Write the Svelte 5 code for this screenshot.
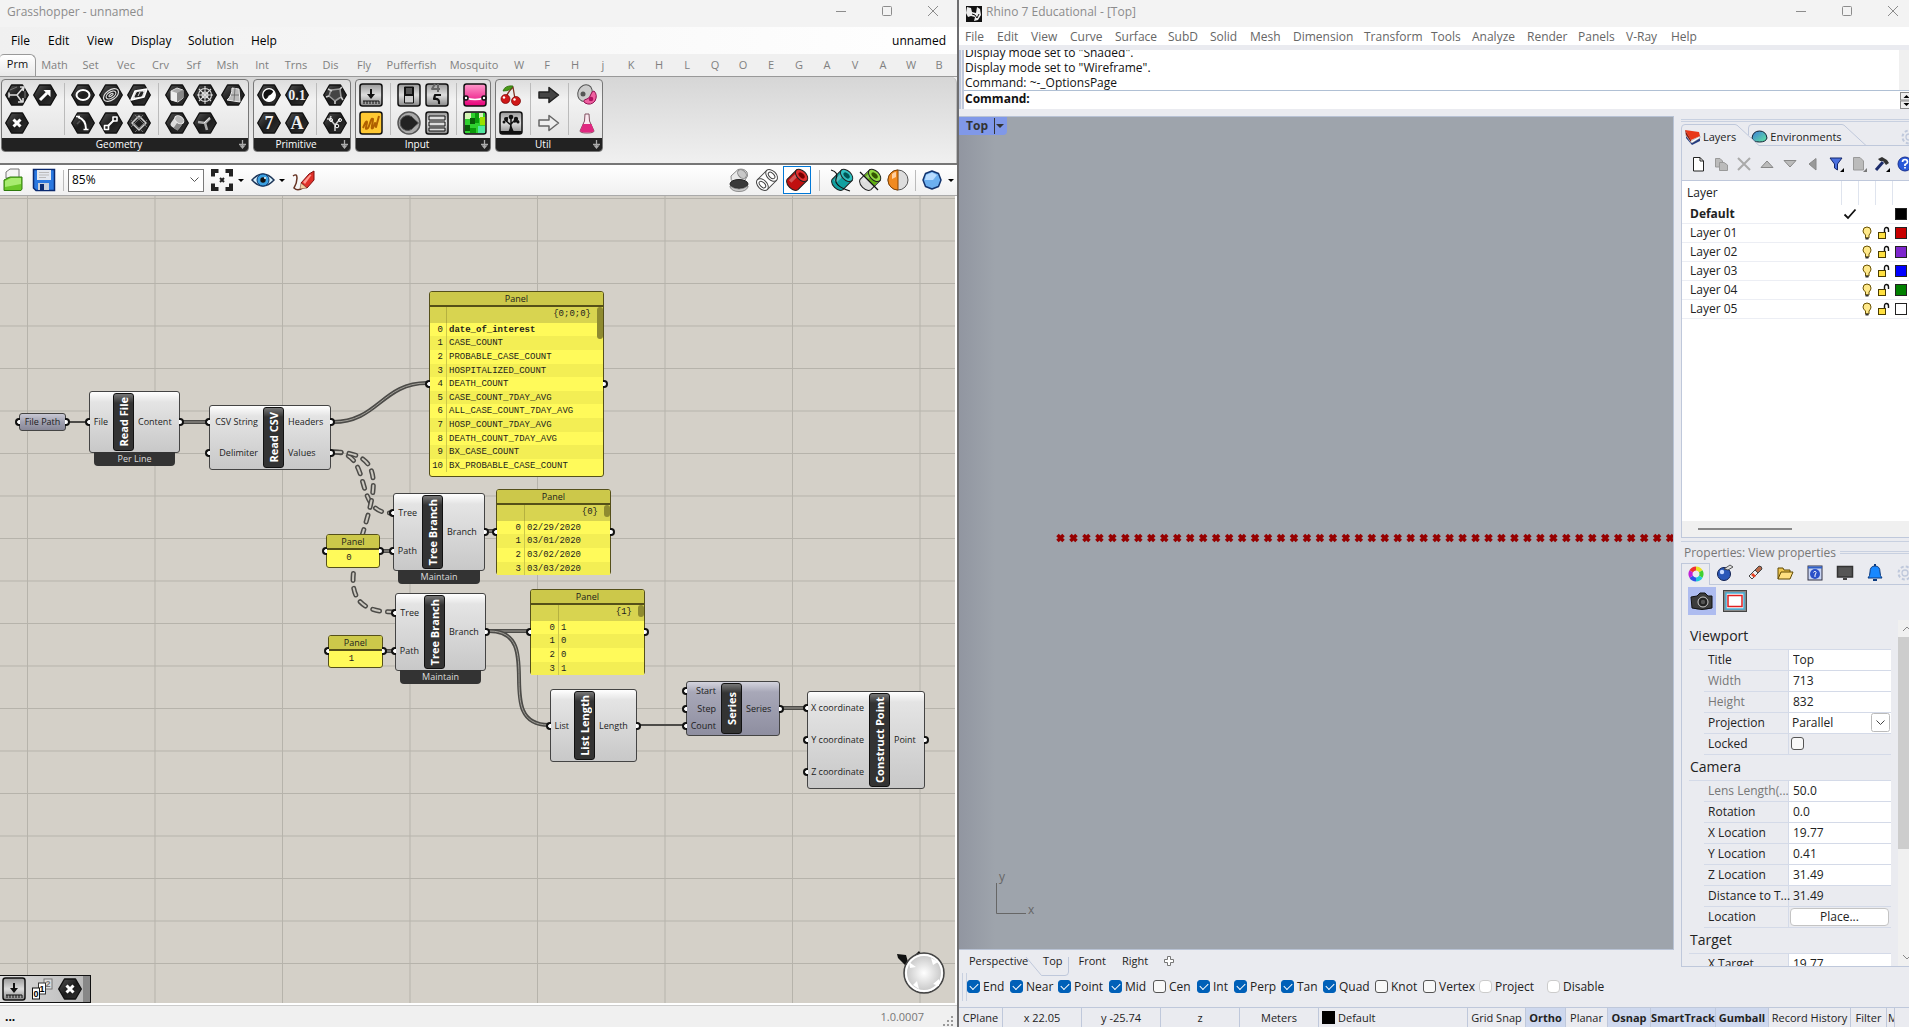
<script>
  const ghMenu = [['File', 37], ['Edit', 39], ['View', 44], ['Display', 57], ['Solution', 63], ['Help', 40]];
  const rhMenu = [['File', 32], ['Edit', 34], ['View', 39], ['Curve', 45], ['Surface', 53], ['SubD', 42], ['Solid', 40], ['Mesh', 43], ['Dimension', 71], ['Transform', 67], ['Tools', 41], ['Analyze', 55], ['Render', 51], ['Panels', 48], ['V-Ray', 45], ['Help', 40]];
  const ghTabs = [['Prm', 36], ['Math', 37], ['Set', 35], ['Vec', 36], ['Crv', 33], ['Srf', 33], ['Msh', 35], ['Int', 34], ['Trns', 34], ['Dis', 35], ['Fly', 32], ['Pufferfish', 63], ['Mosquito', 62], ...'WFHjKHLQOEGAVAWB'.split('').map((c) => [c, 28])];
  const ribbon = [
    { name: 'Geometry', groups: [['fork', 'vector', 'cross'], ['circle', 'spiral', 'plane', 'arc', 'line', 'rect'], ['box', 'mesh', 'surface', 'cyl', 'field']] },
    { name: 'Primitive', groups: [['bool', 'num', 'int', 'text'], ['path', 'tree']] },
    { name: 'Input', groups: [['slider', 'scribble'], ['toggle', 'digits', 'knob', 'list'], ['pink', 'swatch']] },
    { name: 'Util', groups: [['cherry', 'oak'], ['arrowD', 'arrowL'], ['blobs', 'flask']] }
  ];
  const colsOf = (g) => (g.length > 4 ? 3 : g.length > 2 ? 2 : 1);
  const hexKinds = ['fork', 'vector', 'cross', 'circle', 'spiral', 'plane', 'arc', 'line', 'rect', 'box', 'mesh', 'surface', 'cyl', 'field', 'bool', 'num', 'int', 'text', 'path', 'tree'];
  const squareKinds = ['slider', 'toggle', 'digits', 'list', 'oak', 'scribble', 'pink', 'swatch'];

  const nodes = [
    { name: 'Read File', x: 89, y: 195, w: 91, h: 62, label: 23, ins: ['File'], outs: ['Content'], foot: 'Per Line' },
    { name: 'Read CSV', x: 209, y: 209, w: 122, h: 65, label: 53, ins: ['CSV String', 'Delimiter'], outs: ['Headers', 'Values'] },
    { name: 'Tree Branch', x: 393, y: 297, w: 92, h: 78, label: 28, ins: ['Tree', 'Path'], outs: ['Branch'], foot: 'Maintain' },
    { name: 'Tree Branch', x: 395, y: 397, w: 91, h: 78, label: 28, ins: ['Tree', 'Path'], outs: ['Branch'], foot: 'Maintain' },
    { name: 'List Length', x: 550, y: 493, w: 87, h: 73, label: 23, ins: ['List'], outs: ['Length'] },
    { name: 'Series', x: 686, y: 485, w: 94, h: 55, label: 34, ins: ['Start', 'Step', 'Count'], outs: ['Series'], blue: true },
    { name: 'Construct Point', x: 807, y: 495, w: 118, h: 98, label: 61, ins: ['X coordinate', 'Y coordinate', 'Z coordinate'], outs: ['Point'] }
  ];
  const panels = [
    { x: 429, y: 95, w: 175, h: 186, path: '{0;0;0}', gutter: 17, thumb: 32, grip: 88, rows: ['date_of_interest', 'CASE_COUNT', 'PROBABLE_CASE_COUNT', 'HOSPITALIZED_COUNT', 'DEATH_COUNT', 'CASE_COUNT_7DAY_AVG', 'ALL_CASE_COUNT_7DAY_AVG', 'HOSP_COUNT_7DAY_AVG', 'DEATH_COUNT_7DAY_AVG', 'BX_CASE_COUNT', 'BX_PROBABLE_CASE_COUNT'] },
    { x: 496, y: 293, w: 115, h: 86, path: '{0}', gutter: 28, thumb: 12, grip: 38, rows: ['02/29/2020', '03/01/2020', '03/02/2020', '03/03/2020'] },
    { x: 530, y: 393, w: 115, h: 86, path: '{1}', gutter: 28, thumb: 12, grip: 38, rows: ['1', '0', '0', '1'] },
    { x: 326, y: 338, w: 54, h: 34, value: '0', grip: 12 },
    { x: 328, y: 439, w: 55, h: 33, value: '1', grip: 11 }
  ];
  const wires = [
    { d: 'M68 226H88', kind: 'single' },
    { d: 'M183 226H207', kind: 'double' },
    { d: 'M333 226C378 226 382 187 427 187', kind: 'double' },
    { d: 'M334 256C374 256 352 317 391 317', kind: 'dashed' },
    { d: 'M334 256C440 256 286 416 393 416', kind: 'dashed' },
    { d: 'M487 335H495', kind: 'double' },
    { d: 'M489 435H529', kind: 'double' },
    { d: 'M489 435C548 435 490 529 549 529', kind: 'double' },
    { d: 'M382 355H392', kind: 'double' },
    { d: 'M385 455H394', kind: 'double' },
    { d: 'M638 529H684', kind: 'single' },
    { d: 'M781 512H806', kind: 'double' }
  ];
  const layers = [['Default', '#000000'], ['Layer 01', '#c80000'], ['Layer 02', '#7d26cd'], ['Layer 03', '#0000ff'], ['Layer 04', '#008000'], ['Layer 05', '#ffffff']];
  const viewRows = [['Title', 'Top'], ['Width', '713', 1], ['Height', '832', 1], ['Projection', 'Parallel'], ['Locked', '']];
  const cameraRows = [['Lens Length(...', '50.0', 1], ['Rotation', '0.0'], ['X Location', '19.77'], ['Y Location', '0.41'], ['Z Location', '31.49'], ['Distance to T...', '31.49'], ['Location', 'Place...']];
  const snaps = [['End', 1, 43], ['Near', 1, 48], ['Point', 1, 51], ['Mid', 1, 44], ['Cen', 0, 44], ['Int', 1, 37], ['Perp', 1, 47], ['Tan', 1, 42], ['Quad', 1, 52], ['Knot', 0, 48], ['Vertex', 0, 56]];
  const cells = [['CPlane', 44], ['x 22.05', 79], ['y -25.74', 79], ['z', 79], ['Meters', 79]];
  const modes = [['Grid Snap', 58], ['Ortho', 40, 1], ['Planar', 42], ['Osnap', 43, 1], ['SmartTrack', 65, 1], ['Gumball', 53, 1], ['Record History', 82], ['Filter', 36], ['Microsoft', 8]];
  const points = Array.from({ length: 48 }, (_, i) => 101.5 + i * 12.97);
</script>

{#snippet windowButtons()}
  <div class="winbtns">
    <button aria-label="Minimize"><svg width="12" height="12"><path d="M1 6.5H11" /></svg></button>
    <button aria-label="Maximize"><svg width="12" height="12"><rect x="1.5" y="1.5" width="9" height="9" rx="1" /></svg></button>
    <button aria-label="Close"><svg width="12" height="12"><path d="M1 1L11 11M11 1L1 11" /></svg></button>
  </div>
{/snippet}

{#snippet icon(k)}
  <svg class="ico" viewBox="0 0 24 24" fill="none" stroke="#fff" stroke-width="1.6" stroke-linejoin="round">
    {#if hexKinds.includes(k)}
      <path d="M6.5 2H17.5L23.3 12L17.5 22H6.5L.7 12Z" fill="url(#gHex)" stroke="#111" stroke-width="1.4" />
    {/if}
    {#if k === 'fork'}
      <path d="M4 12H12L18 5M12 12L17 19M15 4L19 4L18 8M4 9.500V14.500M13 19H18V15" stroke="#ddd" /><path d="M5 7L12 4M20 8V15" stroke="#777" stroke-width="1" />
    {:else if k === 'vector'}
      <path d="M7 17L14 10" stroke-width="3" /><path d="M10.500 7H17.500V14Z" fill="#fff" stroke="none" />
    {:else if k === 'cross'}
      <path d="M8.500 8.500L15.500 15.500M15.500 8.500L8.500 15.500" stroke-width="3" />
    {:else if k === 'circle'}
      <ellipse cx="12" cy="12" rx="6.500" ry="5" stroke-width="2" />
    {:else if k === 'spiral'}
      <g transform="rotate(-35 12 12)" stroke="#ddd" stroke-width="1.200"><ellipse cx="12" cy="12" rx="8.500" ry="5" /><ellipse cx="12" cy="12" rx="5.500" ry="3" /><ellipse cx="12" cy="12" rx="2.500" ry="1" /></g>
    {:else if k === 'plane'}
      <path d="M4 17L8 8L20 6L17 14Z" fill="#ddd" /><path d="M8 14L10 9.500L16 9L14.500 13Z" fill="#222" stroke="#222" stroke-width="1" /><path d="M11 13L13 9" stroke="#ddd" stroke-width="1" />
    {:else if k === 'arc'}
      <path d="M7 6C13 8 15 12 15 18" stroke-width="1.900" /><path d="M5 5.500H9M12.500 18.500H17.500" /><path d="M6 13L9 10" stroke="#555" />
    {:else if k === 'line'}
      <path d="M8.500 15.500L15.500 8.500" stroke-width="2" /><rect x="5.500" y="14.500" width="4" height="4" fill="#222" /><rect x="14" y="6" width="4" height="4" fill="#222" />
    {:else if k === 'rect'}
      <path d="M12 5L19 12L12 19L5 12Z" stroke="#ccc" /><path d="M8 4L20 16M16 4L4 16M4 9L16 21M20 9L8 21" stroke="#888" stroke-width=".7" />
    {:else if k === 'box'}
      <path d="M6 8L12 5L18 7V15L13 19L6 17Z" fill="#aaa" stroke="#ddd" stroke-width="1" /><path d="M6 8L12 10V19L6 17Z" fill="#eee" stroke="none" /><path d="M12 10L18 7V15L12 19Z" fill="#888" stroke="none" />
    {:else if k === 'mesh'}
      <g stroke="#ddd" stroke-width="1.100"><circle cx="12" cy="12" r="3" /><circle cx="12" cy="12" r="6.500" /><path d="M12 3V21M4 12H20M6 6L18 18M18 6L6 18" /></g>
    {:else if k === 'surface'}
      <path d="M11 5L18 6L19 19L6 17Q11 13 11 5Z" fill="#bbb" stroke="#eee" stroke-width="1" /><path d="M14 5L13 18M10 12L18 12" stroke="#666" stroke-width=".8" />
    {:else if k === 'cyl'}
      <g transform="rotate(35 12 12)"><rect x="7" y="8" width="10" height="10" fill="#ddd" stroke="none" rx="3" /><rect x="12" y="8" width="5" height="10" fill="#888" stroke="none" /><ellipse cx="12" cy="8" rx="5" ry="3.500" fill="#bbb" stroke="#eee" stroke-width="1" /></g>
    {:else if k === 'field'}
      <path d="M12 12L17 7M12 12L5 11M12 12L14 19" stroke="#aaa" stroke-width="2.600" /><path d="M11 12L17 6.500" stroke="#eee" stroke-width="1" />
    {:else if k === 'bool'}
      <circle cx="12" cy="12" r="6" fill="#fff" stroke-width="1" /><path d="M16.200 7.800A6 6 0 0 0 6 12Q6 14 7.800 16.200Q11 15 11.500 12.500Q15 11.500 16.200 7.800Z" fill="#111" stroke="#111" stroke-width=".6" /><circle cx="12" cy="12" r="6.300" stroke-width="1.300" />
    {:else if k === 'num' || k === 'int' || k === 'text'}
      <text x="12" y={k === 'num' ? 16.5 : 18} text-anchor="middle" font-family="Liberation Serif, serif" font-weight="700" font-size={k === 'num' ? 14 : 18} fill="#eee" stroke="none">{k === 'num' ? '0.1' : k === 'int' ? '7' : 'A'}</text>
    {:else if k === 'path'}
      <path d="M8 7L17 6L18 14L12 18L6 13Z" fill="#444" stroke="#999" /><path d="M5 6L9 8M18 14L20 17M12 18V21M6 13L3 14M17 6L19 4" stroke="#ccc" />
    {:else if k === 'tree'}
      <path d="M12 20V14L7 8M12 14L17 8M8 5L7 8L4 8" stroke="#ccc" /><circle cx="8" cy="9" r="1.500" stroke-width="1" /><circle cx="17" cy="9" r="1.500" stroke-width="1" /><circle cx="14" cy="15" r="1.800" stroke-width="1" />
    {:else if squareKinds.includes(k)}
      <rect x="1" y="1" width="22" height="22" rx="2.500" fill={k === 'scribble' ? '#ffc832' : k === 'pink' ? 'url(#gPink)' : 'url(#gGrey)'} stroke="#111" stroke-width="1.500" />
      {#if k === 'slider'}
        <path d="M12 6V13" stroke="#111" stroke-width="2" /><path d="M8 11H16L12 16Z" fill="#111" stroke="none" /><path d="M4 18H20M5 18V21M8 18V21M11 18V21M14 18V21M17 18V21M20 18V21" stroke="#111" stroke-width="1" />
      {:else if k === 'scribble'}
        <path d="M4 17C5 15 7 9 8 11C8 14 5 20 9 17C11 14 12 6 14 8C14 13 11 19 14 17L16 12L17 16L20 5" stroke="#b06000" stroke-width="2" />
      {:else if k === 'toggle'}
        <rect x="7.500" y="4" width="9" height="16" fill="#ccc" stroke="#111" stroke-width="1" /><rect x="8" y="4" width="8" height="9" fill="#111" stroke="none" /><rect x="9" y="5" width="6" height="6" fill="#555" stroke="none" />
      {:else if k === 'digits'}
        <path d="M10 1L7 6H15M13 1V9" stroke="#666" stroke-width="2" /><path d="M16 12H10L9 16Q15 15 14 21" stroke="#111" stroke-width="2.200" />
      {:else if k === 'list'}
        <path d="M4 5H20V9H4ZM4 11H20V15H4ZM4 17H20V20H4Z" stroke="#111" stroke-width="1" fill="#ddd" />
      {:else if k === 'pink'}
        <path d="M3 15Q12 18 21 15" stroke="#fff" stroke-width="1.500" /><circle cx="3" cy="15" r="2" fill="#fff" stroke="#111" /><circle cx="21" cy="15" r="2" fill="#fff" stroke="#111" />
      {:else if k === 'swatch'}
        <g stroke="none"><rect x="2" y="2" width="20" height="20" fill="#2fd02f" /><path d="M2 2H8V8H2ZM14 2H20V7H14Z" fill="#d5f5b5" /><path d="M7 7H12V13H7ZM2 14H7V20H2Z" fill="#085c08" /><path d="M12 2H16V12H12ZM7 17H13V22H7Z" fill="#0a9a0a" /><path d="M17 6H22V14H17Z" fill="#9be100" /><path d="M15 15H22V22H15Z" fill="#4fe8a0" /></g>
      {:else}
        <path d="M11 20L12 13M12 14L6 9M12 13L17 8M12 14V6M8 11L8 6M15 11L20 10" stroke="#111" stroke-width="1.500" /><g fill="#111" stroke="none"><circle cx="7" cy="8" r="2" /><circle cx="12" cy="6" r="2.300" /><circle cx="17" cy="8" r="2.200" /><circle cx="5" cy="11" r="1.500" /><circle cx="19" cy="11" r="1.500" /><path d="M9 21Q12 16 12 14L15 21Z" /><rect x="1" y="20" width="22" height="3" /></g>
      {/if}
    {:else if k === 'knob'}
      <circle cx="12" cy="12" r="11" fill="#aaa" stroke="#555" stroke-width="1.500" /><path d="M21.500 12L17 8A7.500 7.500 0 1 0 17 16Z" fill="#222" stroke="#555" stroke-width="1" />
    {:else if k === 'cherry'}
      <path d="M7 14Q9 9 14 4Q15 10 16 16" stroke="#803020" stroke-width="1.300" /><path d="M4 8Q6 2 14 3Q12 8 4 8Z" fill="#4a9a18" stroke="#2a6a08" stroke-width=".8" /><circle cx="6.500" cy="16" r="4.500" fill="#d01818" stroke="#700" stroke-width=".7" /><circle cx="17" cy="18" r="4.500" fill="#d01818" stroke="#700" stroke-width=".7" /><circle cx="5" cy="14.500" r="1.200" fill="#fff" stroke="none" /><circle cx="15.500" cy="16.500" r="1.200" fill="#fff" stroke="none" />
    {:else if k === 'arrowD' || k === 'arrowL'}
      <path d="M2 9H12V4.500L21.500 12L12 19.500V15H2Z" fill={k === 'arrowD' ? '#444' : '#eee'} stroke={k === 'arrowD' ? '#222' : '#666'} stroke-width="1.500" />
    {:else if k === 'blobs'}
      <ellipse cx="10" cy="10" rx="7" ry="8.500" transform="rotate(25 10 10)" fill="#ccc" stroke="#555" stroke-width="1" /><circle cx="8" cy="11" r="2.500" fill="#555" stroke="none" /><path d="M19 8Q23 12 20 18Q16 23 10 20Q7 17 12 16Q15 15 16 11Q17 8 19 8Z" fill="#f060a0" stroke="#901050" stroke-width="1" /><circle cx="16" cy="16" r="2.300" fill="#b01060" stroke="none" />
    {:else if k === 'flask'}
      <path d="M10 3H14L14.500 10L19 20Q19 22 12 22Q5 22 5 20L9.500 10Z" fill="#fbe8f0" stroke="#805060" stroke-width="1" /><path d="M8 13H16.500L19 20Q18 21.500 12 21.500Q6 21.500 5 20Z" fill="#e02880" stroke="none" />
    {/if}
  </svg>
{/snippet}

{#snippet drum(kind)}
  <svg class="ico" viewBox="0 0 24 24" stroke-linejoin="round">
    {#if kind === 'shade'}
      <path d="M4 8L11 1.500Q17 0 20 4Q22 8 18 12L15 15H7Q3 12 4 8Z" fill="#e8e8e8" stroke="#888" /><ellipse cx="15" cy="6" rx="5" ry="3.600" fill="#c8c8c8" stroke="#888" transform="rotate(45 15 6)" /><ellipse cx="12" cy="16" rx="9" ry="4.500" fill="#3a3a3a" stroke="#222" /><path d="M3 18Q12 24 21 18V19Q19 23.500 12 23.500T3 19Z" fill="#ccc" stroke="#777" stroke-width=".8" />
    {:else if kind === 'wire'}
      <g transform="rotate(45 12 12)" fill="#fff" stroke="#444"><rect x="5" y="6" width="14" height="12" /><ellipse cx="12" cy="5.500" rx="7" ry="4.500" /><ellipse cx="12" cy="5.500" rx="4" ry="2.300" /><ellipse cx="12" cy="18.500" rx="7" ry="4.500" /><ellipse cx="12" cy="18.500" rx="4" ry="2.300" /></g>
    {:else if kind === 'half'}
      <circle cx="12" cy="12" r="10" fill="#ddd" stroke="#555" /><path d="M12 2A10 10 0 0 0 12 22Z" fill="#f08a20" stroke="#8a4500" /><path d="M6 6Q8 4 10 4V9L6 11Z" fill="#ffd0a0" />
    {:else if kind === 'hexblue'}
      <path d="M12 3L18.500 5.500L21 12L18.500 18.500L12 21L5.500 18.500L3 12L5.500 5.500Z" fill="#6cb0f0" stroke="#13346e" stroke-width="1.500" /><path d="M6 7L12 4.500L17 7L13 12L5 12Z" fill="#b8dcff" />
    {:else}
      <g transform="rotate(45 12 12)">
        <path d="M4.500 5V18.500Q6 22.500 12 22.500T19.500 18.500V5Z" fill={kind === 'red' ? '#c01010' : kind === 'teal' ? '#12a0a0' : '#ddd'} stroke="#222" />
        {#if kind === 'green'}<rect x="5" y="5" width="14" height="8" fill="#5fb010" />{/if}
        <path d="M6.500 8V18H10V9Z" fill="#fff" opacity=".3" />
        <ellipse cx="12" cy="5.500" rx="7.500" ry="4.500" fill={kind === 'red' ? '#e03030' : kind === 'teal' ? '#30c0c0' : '#90d840'} stroke="#222" />
        <ellipse cx="12" cy="5.500" rx="3.800" ry="2.200" fill={kind === 'red' ? '#700' : kind === 'teal' ? '#055' : '#350'} />
      </g>
      {#if kind === 'teal'}<path d="M1 2Q9 4 6 11Q4 18 20 23" fill="none" stroke="#111" stroke-width="1.200" />{/if}
      {#if kind === 'green'}<path d="M2 4L20 22" stroke="#111" stroke-width="1.200" />{/if}
    {/if}
  </svg>
{/snippet}

{#snippet gear()}
  <svg width="18" height="18" viewBox="0 0 18 18" fill="none" stroke="#bfc8db" stroke-width="1.300"><circle cx="9" cy="9" r="3" /><circle cx="9" cy="9" r="6.500" stroke-width="2" stroke-dasharray="3 2.100" /></svg>
{/snippet}

<div class="screen">
  <svg class="defs" width="0" height="0" aria-hidden="true">
    <defs>
      <linearGradient id="gHex" x1="0" y1="0" x2="1" y2="1"><stop offset="0" stop-color="#555" /><stop offset=".5" stop-color="#1c1c1c" /><stop offset="1" stop-color="#333" /></linearGradient>
      <linearGradient id="gGrey" x1="0" y1="0" x2="0" y2="1"><stop offset="0" stop-color="#999" /><stop offset=".5" stop-color="#ddd" /><stop offset="1" stop-color="#888" /></linearGradient>
      <linearGradient id="gPink" x1="0" y1="0" x2="0" y2="1"><stop offset="0" stop-color="#ff9acb" /><stop offset="1" stop-color="#e8007a" /></linearGradient>
      <radialGradient id="gBall"><stop offset="0" stop-color="#fff" /><stop offset="1" stop-color="#c2c2c2" /></radialGradient>
      <linearGradient id="gTeal" x1="0" y1="0" x2="1" y2="1"><stop offset="0" stop-color="#3d7bd8" /><stop offset="1" stop-color="#60e8a0" /></linearGradient>
    </defs>
  </svg>

  <section class="gh">
    <header class="title"><span>Grasshopper - unnamed</span>{@render windowButtons()}</header>
    <nav class="ghmenu">
      {#each ghMenu as [m, w]}<button style:width="{w}px">{m}</button>{/each}
      <span class="doc">unnamed</span>
    </nav>
    <div class="tabs">
      {#each ghTabs as [t, w], i}<button class:active={i === 0} style:width="{w}px">{t}</button>{/each}
    </div>
    <div class="ribbon">
      {#each ribbon as r}
        <div class="rpanel">
          <div class="groups">
            {#each r.groups as g}
              <div class="group c{colsOf(g)}">
                {#each g as k}<button aria-label={k}>{@render icon(k)}</button>{/each}
              </div>
            {/each}
          </div>
          <div class="caption">{r.name}<svg width="7" height="9" viewBox="0 0 7 9"><path d="M3.500 0V8M0 4.500H7M1.500 5.500L3.500 8L5.500 5.500" stroke="#aaa" stroke-width="1.300" fill="none" /></svg></div>
        </div>
      {/each}
    </div>

    <div class="toolbar">
      <button aria-label="Open"><svg class="ico" viewBox="0 0 24 24"><path d="M4 10V4L8 1H17V10H4Z" fill="#f4f4f4" stroke="#777" /><path d="M2 12L8 9H20V21L19 22.500H2Z" fill="#6cc82a" stroke="#2e7a0c" /><path d="M3 13L9 10H19V16L3 19Z" fill="#a8ec70" /></svg></button>
      <button class="save" aria-label="Save"><svg class="ico" viewBox="0 0 24 24"><path d="M1.500 1.500H22.500V22.500H4L1.500 20Z" fill="#2a78e0" stroke="#0a2a70" stroke-width="1.500" /><rect x="5" y="2" width="14" height="10" fill="#e4e8ee" /><path d="M7 4.500H17M7 7H17M7 9.500H14" stroke="#bbb" /><rect x="6" y="15" width="11" height="7" fill="#c8d0dc" /><rect x="8" y="16" width="4" height="6" fill="#0a2a70" /></svg></button>
      <i class="sep"></i>
      <span class="zoom"><select aria-label="Zoom"><option>85%</option></select><svg width="11" height="8"><path d="M1.500 1.500L5.500 5.500L9.500 1.500" fill="none" stroke="#555" /></svg></span>
      <button aria-label="Zoom extents"><svg class="ico" viewBox="0 0 24 24" fill="none" stroke="#222" stroke-width="4"><path d="M3 8.500V3H8.500M15.500 3H21V8.500M21 15.500V21H15.500M8.500 21H3V15.500" /><path d="M10 10L14 14M14 10L10 14" stroke-width="2" /></svg></button>
      <i class="drop"></i>
      <button aria-label="Views"><svg class="ico" viewBox="0 0 24 24"><path d="M1 12Q12 0 23 12Q12 24 1 12Z" fill="#d8f0fc" stroke="#1d3557" stroke-width="1.500" /><circle cx="12" cy="12" r="6" fill="#3ba0e0" stroke="#0d3a70" /><circle cx="12" cy="12" r="2.700" fill="#111" /><circle cx="14" cy="10" r="1" fill="#fff" /></svg></button>
      <i class="drop"></i>
      <button aria-label="Sketch"><svg class="ico" viewBox="0 0 24 24"><path d="M1 8Q5 5 5 10T2 20Q6 24 12 19" fill="none" stroke="#632" stroke-width="1.500" /><path d="M9 15L17 6L22 3L22 12L15 20Z" fill="#e03028" stroke="#801010" /><path d="M11 14L18 6.500L19.500 7L13 16Z" fill="#ff9a90" /><path d="M9 15L15 20L8 21Z" fill="#f4cfa0" stroke="#632" stroke-width=".5" /></svg></button>
      <div class="right">
        <button aria-label="No preview">{@render drum('shade')}</button>
        <button aria-label="Wire preview">{@render drum('wire')}</button>
        <button class="on" aria-label="Shaded preview">{@render drum('red')}</button>
        <i class="sep"></i>
        <button aria-label="Selected only">{@render drum('teal')}</button>
        <button aria-label="Document preview">{@render drum('green')}</button>
        <button aria-label="Mesh quality">{@render drum('half')}</button>
        <i class="sep"></i>
        <button aria-label="Preview mesh">{@render drum('hexblue')}</button>
        <i class="drop"></i>
      </div>
    </div>

    <main class="canvas">
      <svg class="wires" width="100%" height="100%">
        {#each wires as w}
          <path class="wire {w.kind}" d={w.d} />
          {#if w.kind !== 'single'}<path class="core {w.kind}" d={w.d} />{/if}
        {/each}
      </svg>

      <div class="param" style:left="19px" style:top="217px"><i class="grip l"></i>File Path<i class="grip r"></i></div>

      {#each nodes as n}
        <div class="node" class:blue={n.blue} style:left="{n.x}px" style:top="{n.y}px" style:width="{n.w}px" style:height="{n.h}px">
          <div class="ins" style:width="{n.label}px">{#each n.ins as p}<div class="port"><i class="grip l"></i>{p}</div>{/each}</div>
          <div class="name"><span>{n.name}</span></div>
          <div class="outs">{#each n.outs as p}<div class="port">{p}<i class="grip r"></i></div>{/each}</div>
          {#if n.foot}<div class="foot">{n.foot}</div>{/if}
        </div>
      {/each}

      {#each panels as p}
        <div class="panel" style:left="{p.x}px" style:top="{p.y}px" style:width="{p.w}px" style:height="{p.h}px">
          <i class="grip l" style:top="{p.grip}px"></i><i class="grip r" style:top="{p.grip}px"></i>
          <div class="ph">Panel</div>
          {#if p.value}
            <div class="pv">{p.value}</div>
          {:else}
            <div class="pp"><span style:width="{p.gutter}px"></span>{p.path}<i style:height="{p.thumb}px"></i></div>
            {#each p.rows as r, i}<div class="pr" class:bold={r === 'date_of_interest'}><span style:width="{p.gutter}px">{i}</span>{r}</div>{/each}
          {/if}
        </div>
      {/each}

      <div class="recent">
        {@render icon('slider')}
        <svg class="ico" viewBox="0 0 24 24" font-size="9" font-family="Liberation Sans, sans-serif" font-weight="700"><rect x="14" y="2" width="8" height="10" fill="#ddd" stroke="#777" /><text x="15.500" y="10" fill="#777">2</text><rect x="8.500" y="6" width="7" height="11" fill="#fff" stroke="#333" /><text x="9.500" y="15">1</text><rect x="2.500" y="11" width="7" height="11" fill="#fff" stroke="#111" /><text x="3.500" y="20">0</text></svg>
        {@render icon('cross')}
      </div>
      <svg class="compass" width="48" height="48" viewBox="0 0 48 48">
        <path d="M0 7L9 8L11 15Q17 9 22 4L24 7Q16 13 12 21L8 18L1 11Z" fill="#111" />
        <circle cx="27" cy="26" r="20" fill="url(#gBall)" stroke="#444" stroke-width="1.500" /><circle cx="27" cy="26" r="18" fill="none" stroke="#fff" stroke-width="2" />
        <path d="M12 15L19 20L13 21ZM34 11L41 15L36 18ZM42 32L36 37L42 39ZM16 38L20 34L22 42Z" fill="#fff" />
      </svg>
    </main>
    <footer class="ghstatus"><b>...</b><span>1.0.0007</span><svg width="12" height="12" fill="#999"><path d="M9 1h2v2h-2zM5 5h2v2H5zM9 5h2v2h-2zM1 9h2v2H1zM5 9h2v2H5zM9 9h2v2H9z" /></svg></footer>
  </section>

  <section class="rh">
    <header class="title">
      <svg width="16" height="16" viewBox="0 0 16 16"><rect width="16" height="16" fill="#111" /><path d="M1 1L5 2L6 6L10 7L11 1L14 3L15 9L12 14L8 15L9 11L5 10L2 11L0 7Z" fill="#eee" /><path d="M6 8L9 9L11 12L13 8" stroke="#111" fill="none" /></svg>
      <span>Rhino 7 Educational - [Top]</span>{@render windowButtons()}
    </header>
    <nav class="rhmenu">{#each rhMenu as [m, w]}<button style:width="{w}px">{m}</button>{/each}</nav>
    <div class="cmd">
      <div class="log"><p>Display mode set to "Shaded".</p><p>Display mode set to "Wireframe".</p><p>Command: ~-_OptionsPage</p></div>
      <label class="prompt"><b>Command:</b><input type="text" /><svg width="9" height="17" viewBox="0 0 9 17"><rect x=".5" y=".5" width="12" height="7.500" fill="#eee" stroke="#888" /><rect x=".5" y="9" width="12" height="7.500" fill="#eee" stroke="#888" /><path d="M3.500 6L6.500 3L9.500 6ZM3.500 11L6.500 14L9.500 11Z" /></svg></label>
    </div>

    <div class="work">
      <div class="viewcol">
        <div class="viewport">
          <button class="vlabel">Top<i></i></button>
          <svg class="points" width="100%" height="12">{#each points as x}<path d="M{x - 3} 3l6 6m0 -6l-6 6" />{/each}</svg>
          <svg class="axes" width="50" height="54"><path d="M3.500 16V46.500H33" fill="none" stroke="#666" /><text x="6" y="14">y</text><text x="35" y="47">x</text></svg>
        </div>
        <div class="vtabs"><button>Perspective</button><button class="active"><svg width="44" height="20" fill="none" stroke="#bfc8db"><path d="M1 0L16.500 18.500H40Q43.500 18.500 43.500 15V0" /></svg>Top</button><button>Front</button><button>Right</button><button aria-label="New viewport"><svg width="10" height="10"><path d="M3.500 .5H6.500V3.500H9.500V6.500H6.500V9.500H3.500V6.500H.5V3.500H3.500Z" fill="#fff" stroke="#777" /></svg></button></div>
      </div>

      <aside>
        <div class="grab"></div>
        <div class="ltabs">
          <svg class="edge" width="228" height="22" fill="none" stroke="#bfc8db"><path d="M.5 22V4Q.5 .5 4 .5H54Q56 .5 58 3L78 21.500H228M67.500 11V4Q67.500 .5 71 .5H161Q163 .5 165 3L185 21.500" /></svg>
          <button><svg width="16" height="16"><path d="M1 6L6 14L15 9V12L7 16L1 9Z" fill="#223a80" /><path d="M1 4L6 12L15 7V9L7 14L1 7Z" fill="#fff" stroke="#888" stroke-width=".5" /><path d="M0 1L14 3L15 7L6 11Z" fill="#e83818" /><path d="M0 1L6 11L6 13L1 6Z" fill="#901808" /></svg>Layers</button>
          <button><svg width="17" height="16"><path d="M1 9Q2 2 8.500 2T16 9Q15 13 8.500 13T1 9Z" fill="url(#gTeal)" stroke="#123" /></svg>Environments</button>
          <span class="gear">{@render gear()}</span>
        </div>
        <div class="ltools">
          <button aria-label="New layer"><svg width="16" height="16"><path d="M3.500 1.500H10L13.500 5V15H3.500Z" fill="#fff" stroke="#222" /><path d="M10 1.500V5H13.500" stroke="#222" fill="none" /></svg></button>
          <button aria-label="New sublayer"><svg width="16" height="16" fill="#bbb" stroke="#999"><path d="M2.500 2.500H7L9.500 5V11H2.500Z" /><path d="M6.500 6.500H11L14.500 9V14.500H6.500Z" /></svg></button>
          <button aria-label="Delete"><svg width="16" height="16"><path d="M2 2L14 14M14 2L2 14" stroke="#aaa" stroke-width="2" /></svg></button>
          <button aria-label="Up"><svg width="16" height="16"><path d="M2 11.500L8 5L14 11.500Z" fill="#bbb" stroke="#888" /></svg></button>
          <button aria-label="Down"><svg width="16" height="16"><path d="M2 4.500L8 11L14 4.500Z" fill="#bbb" stroke="#888" /></svg></button>
          <button aria-label="Parent"><svg width="16" height="16"><path d="M11 2.500L4 8L11 14Z" fill="#999" stroke="#888" /></svg></button>
          <button aria-label="Filter"><svg width="16" height="16"><path d="M2 2H14L9.500 8V14L6.500 12V8Z" fill="#4a70e0" stroke="#14266a" /><path d="M16 12V16H12Z" /></svg></button>
          <button aria-label="Match"><svg width="16" height="16"><path d="M2.500 1.500H9L12.500 5V14H2.500Z" fill="#bbb" stroke="#999" /><path d="M16 12V16H12Z" fill="#777" /></svg></button>
          <button aria-label="Tools"><svg width="16" height="16"><path d="M2 14L9 6" stroke="#1c2c6c" stroke-width="3" /><path d="M4 3L8 1L13 4L15 7L12 9L9 5L6 5Z" fill="#333" /><path d="M16 12V16H12Z" /></svg></button>
          <button aria-label="Help"><svg width="16" height="16"><circle cx="8" cy="8" r="7" fill="#2858d8" stroke="#183090" /><path d="M5.500 6Q5.500 3.500 8 3.500T10.500 6Q10.500 7.500 8 8.500V10M8 11V12.500" stroke="#fff" stroke-width="1.700" fill="none" /></svg></button>
        </div>
        <div class="layers">
          <table>
            <thead><tr><th>Layer</th><th class="c"></th><th class="c"></th><th class="c"></th><th class="c"></th></tr></thead>
            <tbody>
              {#each layers as [name, color], i}
                <tr class:cur={i === 0}>
                  <td>{name}</td>
                  <td>{#if i === 0}<svg width="14" height="12"><path d="M1.500 6.500L5 10L12.500 1.500" fill="none" stroke="#111" stroke-width="1.800" /></svg>{/if}</td>
                  <td>{#if i}<svg width="10" height="14"><path d="M5 1Q9 1 9 5Q9 7 7 9V12H3.500V9Q1 7 1 5Q1 1 5 1Z" fill="#ffe98a" stroke="#6a5200" /><path d="M3.500 12.500H6.500" stroke="#333" stroke-width="2" /></svg>{/if}</td>
                  <td>{#if i}<svg width="13" height="14"><rect x="1.500" y="6.500" width="7" height="6" fill="#ffe040" stroke="#4a3c00" /><path d="M7.500 6V4Q7.500 1.500 9.500 1.500T11.500 4V6" fill="none" stroke="#111" stroke-width="1.400" /></svg>{/if}</td>
                  <td><i class="chip" style:background={color}></i></td>
                </tr>
              {/each}
            </tbody>
          </table>
          <div class="hbar"><i></i></div>
        </div>
        <h2>Properties: View properties<i></i></h2>
        <div class="ptabs">
          <button class="active" aria-label="Object"><svg width="18" height="18" fill="none" stroke-width="4"><g transform="translate(9 9)"><path d="M0 -5.500A5.500 5.500 0 0 1 4.800 -2.700" stroke="#e8e020" /><path d="M4.800 -2.700A5.500 5.500 0 0 1 4.800 2.700" stroke="#40d030" /><path d="M4.800 2.700A5.500 5.500 0 0 1 0 5.500" stroke="#20c8d8" /><path d="M0 5.500A5.500 5.500 0 0 1 -4.800 2.700" stroke="#3050e8" /><path d="M-4.800 2.700A5.500 5.500 0 0 1 -4.800 -2.700" stroke="#c020d8" /><path d="M-4.800 -2.700A5.500 5.500 0 0 1 0 -5.500" stroke="#f03030" /></g></svg></button>
          <button aria-label="Material"><svg width="18" height="18"><circle cx="8" cy="10" r="6.500" fill="#2a58b8" stroke="#102050" /><circle cx="6" cy="8" r="2.200" fill="#c8dcff" /><path d="M8 5L14 1L17 3L12 6Z" fill="#ddd" stroke="#333" stroke-width=".8" /></svg></button>
          <button aria-label="Texture"><svg width="18" height="18"><path d="M3 12L10 5L13 8L6 15Z" fill="#eee" stroke="#444" /><path d="M9 6L13 2Q16 2 16 5L12 9Z" fill="#b86a4a" stroke="#444" /><path d="M7 9L10 12L8 13.500L5 11Z" fill="#e84020" /></svg></button>
          <button aria-label="Libraries"><svg width="18" height="18"><path d="M2 15V4H7L8 6H14V8" fill="#f0c850" stroke="#604800" /><path d="M2 15L5 8H17L14 15Z" fill="#ffe080" stroke="#604800" /></svg></button>
          <button aria-label="Help panel"><svg width="18" height="18"><rect x="2" y="2" width="14" height="14" fill="#c8d4f4" stroke="#334" /><path d="M2 3.500H16" stroke="#3060c8" stroke-width="2" /><circle cx="9" cy="10" r="5" fill="#2a50c8" /><path d="M7.500 8.500Q8 7 9.500 7.500T9 11V13" stroke="#fff" fill="none" /></svg></button>
          <button aria-label="Display"><svg width="18" height="18"><rect x="1.500" y="2.500" width="15" height="10.500" fill="#555" stroke="#333" stroke-width="1.500" /><path d="M7 14H11V16H7Z" fill="#444" /></svg></button>
          <button aria-label="Notifications"><svg width="18" height="18"><path d="M9 2Q14 2 14 8Q14 12 16 14H2Q4 12 4 8Q4 2 9 2Z" fill="#1888ff" stroke="#0a3a80" /><path d="M9 0V2M7 16H11" stroke="#0a3a80" stroke-width="2" /></svg></button>
          <button aria-label="Options">{@render gear()}</button>
        </div>
        <div class="props">
          <div class="pbtns">
            <button class="on" aria-label="Camera"><svg width="24" height="20"><path d="M1 6L7 5L10 2H15L18 5H22V17Q12 20 2 17Z" fill="#3c3c3c" stroke="#111" /><circle cx="13" cy="11" r="5" fill="#222" stroke="#ccc" /><circle cx="13" cy="11" r="2.200" fill="#555" /></svg></button>
            <button aria-label="Frame"><svg width="24" height="22"><rect x=".5" y=".5" width="23" height="21" fill="#888" stroke="#444" /><rect x="3" y="3" width="18" height="16" fill="#fff" stroke="#48b0d8" stroke-width="1.500" /><rect x="5" y="5.500" width="14" height="11" fill="#fff" stroke="#e02020" stroke-width="1.500" /></svg></button>
          </div>
          <div class="pscroll">
            <h3>Viewport</h3>
            <table><tbody>
              {#each viewRows as [k, v, dim]}
                <tr><th class:dim><label for="p-{k}">{k}</label></th>
                  {#if k === 'Projection'}<td class="pick"><select id="p-{k}"><option>{v}</option></select><svg width="19" height="19"><rect x=".5" y=".5" width="18" height="18" rx="2" fill="#fff" stroke="#bbb" /><path d="M5.500 7.500L9.500 11.500L13.500 7.500" fill="none" stroke="#444" /></svg></td>
                  {:else if k === 'Locked'}<td class="flat"><input id="p-{k}" type="checkbox" class="box" /></td>
                  {:else}<td><input id="p-{k}" type="text" value={v} /></td>{/if}
                </tr>
              {/each}
            </tbody></table>
            <h3>Camera</h3>
            <table><tbody>
              {#each cameraRows as [k, v, dim]}
                <tr><th class:dim><label for="p-{k}">{k}</label></th>
                  {#if k === 'Location'}<td class="flat"><button id="p-{k}" class="place">{v}</button></td>
                  {:else}<td class:flat={k.startsWith('Dist')}><input id="p-{k}" type="text" value={v} /></td>{/if}
                </tr>
              {/each}
            </tbody></table>
            <h3>Target</h3>
            <table><tbody><tr><th><label for="xt">X Target</label></th><td><input id="xt" type="text" value="19.77" /></td></tr></tbody></table>
          </div>
          <div class="vbar"><svg width="11" height="17"><path d="M5 11L9 7L13 11" /></svg><i></i><svg width="11" height="17"><path d="M5 6L9 10L13 6" /></svg></div>
        </div>
      </aside>
    </div>

    <div class="osnap">
      {#each snaps as [s, on, w]}<label style:width="{w}px"><input type="checkbox" class="box" checked={!!on} />{s}</label>{/each}
      <label class="lite"><input type="checkbox" class="box" />Project</label>
      <label class="lite"><input type="checkbox" class="box" />Disable</label>
    </div>
    <footer class="status">
      {#each cells as [c, w]}<button style:width="{w}px">{c}</button>{/each}
      <button class="cur"><i></i>Default</button>
      {#each modes as [c, w, on]}<button class:on class:cut={w < 10} style:width="{w}px">{c}</button>{/each}
      <span class="end"></span>
    </footer>
  </section>
</div>

<style>
  :global(body) { margin: 0; }
  * { box-sizing: border-box; }
  .screen { display: grid; grid-template-columns: 959fr 950fr; grid-template-rows: minmax(0, 1fr); height: 100vh; overflow: hidden; font: 12px/16px 'Open Sans', 'Noto Sans', sans-serif; color: #222; background: #f0f0f0; }
  .defs { position: absolute; }
  button { font: inherit; color: inherit; background: none; border: 0; padding: 0; margin: 0; white-space: nowrap; }
  svg { display: block; flex: none; }
  .ico { width: 24px; height: 24px; }

  .title { display: flex; align-items: center; height: 27px; padding: 0 7px; background: #f3f3f3; color: #8c8c8c; flex: none; }
  .title span { flex: 1; padding-bottom: 3px; }
  .winbtns { display: flex; gap: 34px; padding: 0 11px 5px 0; }
  .winbtns svg { fill: none; stroke: #8c8c8c; }

  .gh { min-width: 0; display: flex; flex-direction: column; border-right: 2px solid #6e6e70; color: #000; }
  .ghmenu { display: flex; align-items: center; height: 27px; padding: 0 11px; background: linear-gradient(90deg, #f0f0f0, #fff); }
  .ghmenu button { text-align: left; }
  .doc { margin-left: auto; }
  .tabs { display: flex; height: 23px; overflow: hidden; align-items: stretch; color: #808080; border-bottom: 1px solid #999; font-size: 11px; }
  .tabs button { flex: none; }
  .tabs .active { background: linear-gradient(#fff, #e8e8e8); border: 1px solid #999; border-left: 0; border-bottom: 0; border-radius: 4px 6px 0 0; color: #111; padding: 0 0 3px; }
  .ribbon { display: flex; gap: 4px; padding: 2px 1px 11px; background: linear-gradient(#d6d6d6, #f0f0f0); border-right: 1px solid #bbb; border-radius: 0 6px 0 0; height: 86px; }
  .rpanel { border: 1px solid #777; border-radius: 4px; background: linear-gradient(#ddd, #f2f2f2 20px, #e0e0e0); overflow: hidden; display: flex; flex-direction: column; }
  .groups { display: flex; flex: 1; padding: 3px; }
  .group { display: grid; gap: 4px; align-content: start; grid-template-columns: repeat(2, 24px); }
  .group + .group { margin-left: 7px; padding-left: 6px; border-left: 1px solid #bbb; }
  .group.c1 { grid-template-columns: 24px; }
  .group.c3 { grid-template-columns: repeat(3, 24px); }
  .caption { position: relative; height: 14px; padding-right: 12px; background: #222; color: #fff; font-size: 10px; line-height: 13px; text-align: center; }
  .caption svg { position: absolute; right: 2px; top: 2px; }

  .toolbar { display: flex; align-items: center; height: 33px; padding: 0 3px 0 2px; border-top: 2px solid #777; background: linear-gradient(#fff, #f0f0f0); border-bottom: 1px solid #aaa; }
  .save { margin: 0 7px 0 6px; }
  .sep { width: 1px; height: 21px; background: #bbb; flex: none; }
  .zoom { display: flex; align-items: center; width: 136px; height: 23px; margin: 0 6px 0 4px; padding: 0 3px; border: 1px solid #7a7a7a; background: #fff; flex: none; }
  .zoom select { flex: 1; min-width: 0; border: 0; background: none; font: inherit; appearance: none; padding: 0; }
  .drop { border: 3px solid transparent; border-top-color: #000; border-bottom: 0; margin: 0 7px 0 4px; flex: none; }
  .right { display: flex; align-items: center; margin-left: auto; }
  .right button { margin-right: 4px; }
  .right .on { border: 1px solid #0078d7; height: 28px; width: 28px; padding: 1px; margin: 0 7px 0 0; background: #fff; }
  .right .sep { margin: 0 10px 0 1px; }
  .right .sep ~ button { margin-right: 4px; }
  .right .sep ~ .sep { margin: 0 4px 0 1px; }
  .right .drop { margin: 0; }

  .canvas { position: relative; flex: 1; overflow: hidden; border-right: 2px solid #fff; border-bottom: 2px solid #fff; background: #d4d0c8 linear-gradient(90deg, #b6b3ab 1px, transparent 1px) 27px 0 / 127.5px 100%; font-size: 9px; line-height: 12px; color: #1c1c1c; }
  .canvas::before { content: ''; position: absolute; inset: 0; background: linear-gradient(#b6b3ab 1px, transparent 1px) 0 2px / 100% 42.5px; }
  .wires { position: absolute; inset: 0; fill: none; }
  .wire { stroke: #4c4b48; stroke-width: 4; }
  .wire.single { stroke-width: 2; }
  .wire.dashed { stroke-dasharray: 7 8; stroke-linecap: round; stroke-width: 5; }
  .core { stroke: #a19f98; stroke-width: 1; }
  .core.dashed { stroke: #ccc9c1; stroke-width: 2; stroke-dasharray: 7 8; stroke-linecap: round; }
  .node, .panel, .param { position: absolute; border: 1px solid #444; border-radius: 3px; background: linear-gradient(#fff, #e4e4e4 10px, #c8c8c8); }
  .node { display: flex; }
  .node.blue { background: linear-gradient(#d4d4de, #a8a8b8 10px, #8e8ea0); }
  .param { width: 47px; height: 18px; line-height: 15px; text-align: center; background: linear-gradient(#c8c8d4, #a0a0b0 8px, #888898); white-space: nowrap; }
  .param .grip { top: 4px; }
  .ins, .outs { display: flex; flex-direction: column; flex: none; }
  .outs { flex: 1; }
  .port { position: relative; flex: 1; display: flex; align-items: center; white-space: nowrap; }
  .ins .port { justify-content: flex-end; padding-right: 5px; }
  .outs .port { padding-left: 4px; }
  .grip { position: absolute; width: 5px; height: 8px; border: 2px solid #111; background: #fff; }
  .grip.l { left: -5px; border-right: 0; border-radius: 5px 0 0 5px; }
  .grip.r { right: -5px; border-left: 0; border-radius: 0 5px 5px 0; }
  .name { width: 21px; flex: none; margin: 1px 0; border: 1px solid #111; border-radius: 3px; background: linear-gradient(#777, #333 9px, #333); display: flex; align-items: center; justify-content: center; color: #fff; }
  .name span { writing-mode: vertical-rl; transform: rotate(180deg); font-weight: 700; font-size: 11px; line-height: 14px; white-space: nowrap; }
  .foot { position: absolute; left: 4px; right: 4px; top: 100%; height: 14px; background: #333; color: #ddd; border-radius: 0 0 4px 4px; text-align: center; line-height: 13px; }
  .panel { display: flex; flex-direction: column; background: #fffa5a; border-color: #55501a; }
  .ph { flex: none; height: 15px; line-height: 14px; text-align: center; background: #ccc84a; border-bottom: 2px solid #555018; border-radius: 2px 2px 0 0; }
  .pv { text-align: center; font: 9px/14px 'Liberation Mono', monospace; padding: 1px 8px 0 0; }
  .pp, .pr { position: relative; display: flex; font: 9px/14px 'Liberation Mono', monospace; white-space: pre; height: 14px; flex: none; }
  .pp { justify-content: flex-end; padding-right: 12px; height: 16px; line-height: 15px; background: #d8d450; }
  .pp span { margin-right: auto; border-right: 1px solid #b5b140; }
  .pp i { position: absolute; right: 0; top: 0; width: 6px; border-radius: 3px; background: #8f8b30; z-index: 1; }
  .pr:nth-child(even) { background: #f3ee54; }
  .pr:nth-child(5n), .pr:nth-child(5n + 3) { height: 13px; }
  .pr:last-child { height: 13px; }
  .pr span { text-align: right; padding-right: 3px; margin-right: 2px; border-right: 1px solid #ccc84a; flex: none; }
  .bold { font-weight: 700; }
  .bold span { font-weight: 400; }
  .recent { position: absolute; left: 0; bottom: 0; display: flex; gap: 4px; width: 91px; height: 28px; padding: 1px 1px 1px 2px; border: 1px solid #111; border-left: 0; background: linear-gradient(90deg, #ddd, #bbb 83px, #888 83px); }
  .compass { position: absolute; right: 10px; bottom: 8px; }
  .ghstatus { display: flex; align-items: center; height: 22px; padding: 0 3px 0 5px; background: #f0f0f0; border-top: 1px solid #ccc; }
  .ghstatus span { margin-left: auto; margin-right: 18px; color: #777; font-size: 11px; }
  .ghstatus svg { margin-top: 8px; }

  .rh { min-width: 0; display: flex; flex-direction: column; background: #eaebf0; }
  .rh .title span { padding-left: 4px; }
  .rh .winbtns { padding-right: 3px; }
  .rhmenu { display: flex; height: 18px; padding-left: 6px; background: #fff; color: #666; flex: none; }
  .rhmenu button { text-align: left; flex: none; line-height: 19px; }
  .cmd { margin: 5px 0 0; border-left: 5px double #bfc8db; color: #111; flex: none; }
  .log { height: 40px; overflow: hidden; display: flex; flex-direction: column; justify-content: flex-end; background: #fff; border-right: 10px solid #f0f0f0; padding-left: 1px; }
  .log p { margin: 0; line-height: 15px; flex: none; }
  .prompt { display: flex; align-items: center; height: 19px; border-top: 1px solid #b0c0d4; background: #fff; padding-left: 1px; }
  .prompt b { line-height: 17px; padding-bottom: 3px; }
  .prompt input { flex: 1; border: 0; background: none; min-width: 0; }
  .work { flex: 1; display: flex; min-height: 0; padding-top: 7px; gap: 7px; }
  .viewcol { flex: 1; min-width: 0; display: flex; flex-direction: column; }
  .viewport { position: relative; flex: 1; overflow: hidden; border: 1px solid #b8c2d4; border-left: 0; background: #9ea4ac linear-gradient(90deg, rgba(100, 100, 120, .22), transparent 36px); }
  .vlabel { display: flex; align-items: center; height: 18px; width: 48px; padding-left: 7px; background: #8098e8; border-radius: 0 0 4px 0; font-weight: 700; color: #333; }
  .vlabel i { margin-left: 6px; height: 16px; border-left: 1px solid #333; position: relative; }
  .vlabel i::after { content: ''; position: absolute; left: 1px; top: 6px; border: 4px solid transparent; border-top-color: #333; border-bottom: 0; }
  .points { position: absolute; left: 0; top: 415px; stroke: #960000; stroke-width: 3.5; }
  .axes { position: absolute; left: 34px; bottom: 28px; fill: #666; font-size: 12px; }
  .vtabs { display: flex; align-items: flex-start; height: 22px; padding-left: 10px; gap: 16px; font-size: 11px; line-height: 22px; }
  .vtabs .active { position: relative; margin-left: -1px; }
  .vtabs .active svg { position: absolute; left: -18px; top: 1px; }
  .vtabs > button > svg { margin-top: 6px; }

  aside { width: 228px; flex: none; margin-bottom: 5px; padding-top: 3px; display: flex; flex-direction: column; min-height: 0; color: #222; }
  .grab { height: 3px; border: 1px solid #c8d0e0; border-width: 1px 0; flex: none; }
  .ltabs { position: relative; display: flex; align-items: center; gap: 15px; height: 22px; margin-top: 2px; padding: 3px 0 0 4px; flex: none; font-size: 11px; }
  .edge { position: absolute; left: 0; top: 0; }
  .ltabs button { display: flex; align-items: center; gap: 2px; }
  .ltabs .gear { position: absolute; left: 219px; top: 4px; }
  .ltools { display: flex; align-items: center; gap: 7px; height: 34px; padding: 2px 0 0 8px; border-left: 1px solid #bfc8db; overflow: hidden; flex: none; }
  .layers { flex: 360 1 0; display: flex; flex-direction: column; border: 1px solid #bfc8db; border-right: 0; background: #fff; min-height: 0; }
  table { border-collapse: separate; border-spacing: 0; table-layout: fixed; width: 100%; }
  .layers th { height: 24px; text-align: left; font-weight: 400; padding: 0 0 0 5px; }
  .layers .c { width: 17px; border-left: 1px solid #dfe4ee; padding: 0; }
  .layers td { height: 19px; line-height: 16px; padding: 0; border-bottom: 1px solid #eceef4; }
  .layers td:first-child { padding-left: 8px; }
  .layers td svg, .chip { margin: auto; }
  .cur td { font-weight: 700; }
  .chip { display: block; width: 12px; height: 12px; border: 1px solid #222; }
  .hbar { margin-top: auto; height: 16px; background: #f0f0f0; padding: 7px 0 0 16px; }
  .hbar i { display: block; width: 94px; height: 2px; background: #888; }
  h2 { display: flex; align-items: center; gap: 4px; margin: 3px 0 0; padding: 1px 0 0 3px; border-top: 1px solid #c8d0e0; height: 22px; font-size: 12px; font-weight: 400; color: #777; flex: none; white-space: nowrap; }
  h2 i { flex: 1; height: 3px; border: 1px solid #c8d0e0; border-width: 1px 0; }
  .ptabs { display: flex; align-items: stretch; height: 22px; flex: none; overflow: hidden; }
  .ptabs button { width: 30px; flex: none; display: flex; justify-content: center; align-items: center; border-bottom: 1px solid #bfc8db; }
  .ptabs .active { width: 29px; border: 1px solid #bfc8db; border-bottom: 0; }
  .props { flex: 384 1 0; position: relative; display: flex; flex-direction: column; min-height: 0; border: 1px solid #bfc8db; border-width: 0 0 1px 1px; padding: 2px 18px 0 6px; }
  .pbtns { display: flex; gap: 5px; height: 30px; flex: none; }
  .pbtns button { width: 28px; height: 28px; display: flex; align-items: center; justify-content: center; }
  .pbtns .on { background: #aebcf0; }
  .pscroll { flex: 1; min-height: 0; overflow: hidden; padding: 7px 0 0 1px; }
  h3 { margin: 0; padding-left: 1px; font-size: 14px; font-weight: 400; line-height: 24px; height: 26px; border-bottom: 1px solid #d4dae8; }
  .pscroll table { width: calc(100% - 15px); margin-left: 15px; }
  .pscroll th { width: 84px; height: 21px; text-align: left; font-weight: 400; padding: 0 0 0 4px; border-bottom: 1px solid #d4dae8; white-space: nowrap; }
  .dim { color: #777; }
  .pscroll td { padding: 0; background: #fff; border-left: 1px solid #d4dae8; border-bottom: 1px solid #d4dae8; }
  .pscroll td.flat { background: none; }
  .pscroll input[type='text'], .pscroll select { display: block; width: 100%; height: 20px; border: 0; background: transparent; padding: 0 4px; font: inherit; color: #222; appearance: none; }
  .pscroll select { padding: 0 3px; }
  .pick { position: relative; }
  .pick svg { position: absolute; right: 1px; top: 0; pointer-events: none; }
  .box { appearance: none; display: block; flex: none; width: 13px; height: 13px; margin: 0 3px 0 0; border: 1px solid #555; border-radius: 3px; background: #f8f8f8; }
  .box:checked { background: #0060b8; border-color: #0060b8; }
  .box:checked::after { content: ''; display: block; width: 7px; height: 4px; margin: 2px 0 0 2px; border: 1px solid #fff; border-width: 0 0 1px 1px; transform: rotate(-45deg); }
  td .box { margin-left: 2px; }
  .place { display: block; width: 99px; height: 18px; margin-left: 1px; border: 1px solid #c4c4c4; border-radius: 4px; background: #fff; line-height: 15px; }
  .vbar { position: absolute; right: 0; top: 35px; bottom: 0; width: 11px; display: flex; flex-direction: column; background: #f0f0f0; overflow: hidden; }
  .vbar i { flex: 214 1 0; background: #cdcdcd; }
  .vbar svg:last-child { margin-top: 100px; }
  .vbar svg { fill: none; stroke: #888; }

  .osnap { display: flex; align-items: center; height: 35px; padding: 0 0 6px 3px; flex: none; }
  .osnap label { display: flex; align-items: center; white-space: nowrap; flex: none; }
  .osnap .lite { width: 68px; }
  .lite .box { border-color: #ccc; border-radius: 4px; background: #fff; }
  .osnap::before { content: ''; width: 3px; height: 28px; border: 1px solid #c8d0e0; border-width: 0 1px; }
  .status { display: flex; height: 20px; border-top: 1px solid #bfc8db; flex: none; overflow: hidden; font-size: 11px; }
  .status button { flex: none; border-right: 1px solid #bfc8db; overflow: hidden; line-height: 18px; }
  .status .cur { flex: 1; display: flex; align-items: center; gap: 3px; padding-left: 3px; }
  .status .cur i { width: 13px; height: 13px; background: #000; }
  .status .on { background: #ced8ee; font-weight: 700; }
  .status .cut { text-align: left; padding-left: 1px; }
  .end { width: 14px; flex: none; }
</style>
